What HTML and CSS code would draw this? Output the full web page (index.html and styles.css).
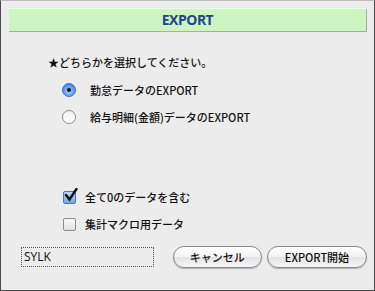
FILE: index.html
```html
<!DOCTYPE html>
<html lang="ja">
<head>
    <meta charset="UTF-8">
    <title>EXPORT</title>
    <link rel="stylesheet" href="styles.css">
</head>
<body>
    <div class="dialog">
        <div class="title-bar">EXPORT</div>
        <p class="prompt">★どちらかを選択してください。</p>
        <div class="options">
            <label class="row"><span class="radio on"><span class="dot"></span></span>勤怠データのEXPORT</label>
            <label class="row"><span class="radio"></span>給与明細(金額)データのEXPORT</label>
        </div>
        <div class="checks">
            <label class="row"><span class="check on">
                <svg width="16" height="16" viewBox="0 0 16 16"><path d="M3 7 L6.5 11.5 L13.5 1" fill="none" stroke="#111" stroke-width="2.4" stroke-linecap="round"/></svg>
            </span>全て0のデータを含む</label>
            <label class="row"><span class="check"></span>集計マクロ用データ</label>
        </div>
        <div class="footer">
            <div class="format">SYLK</div>
            <button class="btn cancel">キャンセル</button>
            <button class="btn start">EXPORT開始</button>
        </div>
    </div>
</body>
</html>
```

FILE: styles.css
```css
body {
    margin: 0;
    font-family: "Noto Sans CJK JP", "Noto Sans", sans-serif;
    font-size: 11px;
    color: #111;
}

.dialog {
    box-sizing: border-box;
    width: 375px;
    height: 291px;
    background-color: #ececec;
    border: 1px solid #4a4a4a;
    border-top-color: #bdbdbd;
    padding: 7px 7px 0 7px;
    display: flex;
    flex-direction: column;
}

.title-bar {
    height: 22px;
    background-color: #ccf5c2;
    border-top: 1px solid #e8fbe4;
    border-left: 1px solid #e0f5dc;
    box-shadow: 1px 1px 0 #a9a9a9;
    margin-right: 1px;
    color: #23438a;
    font-family: "Open Sans", "Noto Sans", sans-serif;
    font-weight: bold;
    font-size: 14px;
    letter-spacing: -0.5px;
    line-height: 22px;
    text-align: center;
}

.prompt {
    margin: 23px 0 0 40px;
    line-height: 16px;
    font-weight: 500;
}

.options {
    margin: 12px 0 0 54px;
    display: flex;
    flex-direction: column;
    gap: 11px;
}

.checks {
    margin: 64px 0 0 55px;
    display: flex;
    flex-direction: column;
    gap: 11px;
}

.row {
    display: flex;
    align-items: center;
    height: 16px;
    gap: 8px;
    font-weight: 500;
}

.radio {
    box-sizing: border-box;
    width: 14px;
    height: 14px;
    border-radius: 50%;
    border: 1px solid #8d8d8d;
    background: linear-gradient(#f2f2f2, #ffffff);
    display: flex;
    align-items: center;
    justify-content: center;
    margin-right: 6px;
}

.radio.on {
    border-color: #3a6fc4;
    background: radial-gradient(circle at 50% 60%, #a9d2ff, #4a8ae8 70%, #2f68c8);
}

.radio .dot {
    width: 4px;
    height: 4px;
    border-radius: 50%;
    background-color: #111;
}

.check {
    box-sizing: border-box;
    width: 13px;
    height: 13px;
    border: 1px solid #8d8d8d;
    border-radius: 2px;
    background: linear-gradient(#f8f8f8, #e2e2e2);
    position: relative;
    margin-right: 1px;
}

.check.on {
    border-color: #4b78c0;
    background: linear-gradient(#bcd8fb, #6ea4ec);
}

.check svg {
    position: absolute;
    left: -1px;
    top: -4px;
}

.footer {
    margin-top: auto;
    margin-bottom: 22px;
    display: flex;
    align-items: center;
}

.format {
    box-sizing: border-box;
    width: 134px;
    height: 20px;
    margin-left: 13px;
    border: 1px dotted #555;
    padding-left: 2px;
    line-height: 18px;
    font-family: "Open Sans", "Noto Sans", sans-serif;
    font-size: 12px;
}

.btn {
    height: 22px;
    border: 1px solid #8a8a8a;
    border-radius: 11px;
    background: linear-gradient(#ffffff, #f2f2f2 50%, #e3e3e3 51%, #f6f6f6);
    box-shadow: 0 1px 1px rgba(0, 0, 0, 0.25);
    font-family: "Noto Sans CJK JP", "Noto Sans", sans-serif;
    font-size: 11px;
    font-weight: 500;
    color: #111;
    padding: 0;
}

.cancel {
    width: 90px;
    margin-left: 19px;
}

.start {
    width: 101px;
    margin-left: 5px;
}
```
